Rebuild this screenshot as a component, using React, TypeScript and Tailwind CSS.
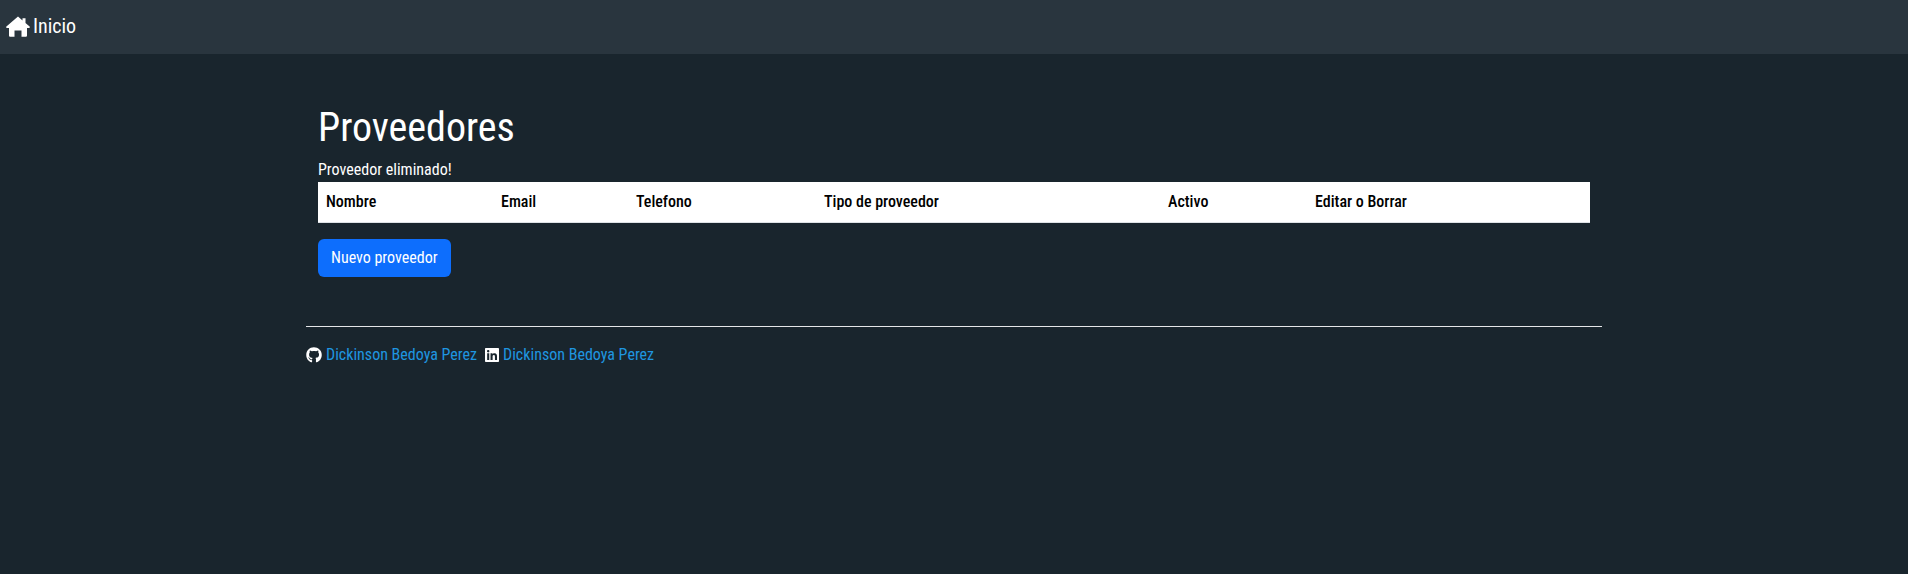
import { FaGithub, FaLinkedin } from 'react-icons/fa'

const columns = [
  { label: 'Nombre', width: 'w-[175px]' },
  { label: 'Email', width: 'w-[135px]' },
  { label: 'Telefono', width: 'w-[188px]' },
  { label: 'Tipo de proveedor', width: 'w-[344px]' },
  { label: 'Activo', width: 'w-[147px]' },
  { label: 'Editar o Borrar', width: 'w-[283px]' },
]

function HouseIcon() {
  return (
    <svg viewBox="0 0 24 21" className="w-[24px] h-[21px]" fill="currentColor">
      <path d="M12 0.5 L16.5 4.4 V2.2 H19.5 V7 L23.6 10.6 C24.2 11.2 23.7 12 23 12 H21 V19.5 C21 20.3 20.4 20.8 19.6 20.8 H15.5 V14.5 H8.5 V20.8 H4.4 C3.6 20.8 3 20.3 3 19.5 V12 H1 C0.3 12 -0.2 11.2 0.4 10.6 Z" />
    </svg>
  )
}

export default function App() {
  return (
    <div className="min-h-[574px] bg-[#19252d] text-white font-['Roboto',sans-serif] font-stretch-condensed text-base">
      <nav className="h-[54px] pb-[2px] bg-[#29353e] flex items-center px-1.5">
        <a className="flex items-center gap-[3px] text-[20px] text-white">
          <HouseIcon />
          <span>Inicio</span>
        </a>
      </nav>

      <main className="w-[1320px] mx-auto px-3">
        <div className="px-3 pt-[50px]">
          <h1 className="text-[40px] leading-[48px] mb-[6px]">Proveedores</h1>
          <p className="text-base leading-6 h-[24px]">Proveedor eliminado!</p>
          <table className="w-[1272px] table-fixed bg-white text-black border-b border-[#dee2e6]">
            <thead>
              <tr>
                {columns.map((col) => (
                  <th key={col.label} className={`${col.width} p-2 text-left font-medium leading-6`}>
                    {col.label}
                  </th>
                ))}
              </tr>
            </thead>
          </table>
          <button className="mt-4 h-[38px] px-[13px] rounded-md bg-[#0d6efd] text-white text-base">
            Nuevo proveedor
          </button>
        </div>

        <hr className="mt-[49px] border-t border-[#e4e6e8]" />

        <footer className="mt-[16px] flex items-center h-6 text-[#1f96e0]">
          <FaGithub className="w-4 h-4 text-white mr-1" />
          <a>Dickinson Bedoya Perez</a>
          <FaLinkedin className="w-4 h-4 text-white ml-[7px] mr-[3px]" />
          <a>Dickinson Bedoya Perez</a>
        </footer>
      </main>
    </div>
  )
}
